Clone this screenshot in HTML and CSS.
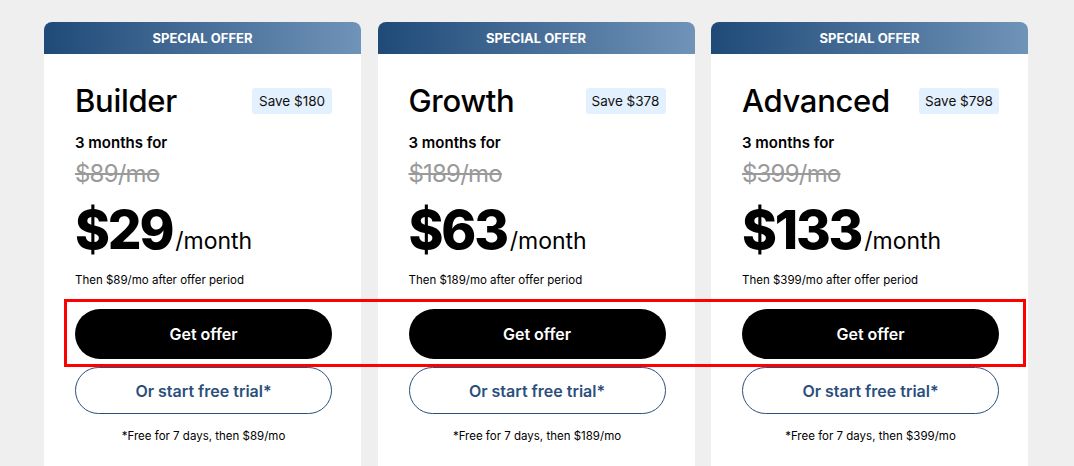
FILE: index.html
```html
<!DOCTYPE html>
<html lang="en">
<head>
<meta charset="utf-8">
<title>Pricing</title>
<link rel="stylesheet" href="styles.css">
</head>
<body>
<div class="plans">
  <div class="card">
    <div class="banner">SPECIAL OFFER</div>
    <div class="body">
      <div class="title-row">
        <h2 class="name">Builder</h2>
        <span class="save">Save $180</span>
      </div>
      <div class="term">3 months for</div>
      <div class="old">$89/mo</div>
      <div class="price"><span class="amount">$29</span><span class="per">/month</span></div>
      <div class="then">Then $89/mo after offer period</div>
      <button class="btn primary">Get offer</button>
      <button class="btn outline">Or start free trial*</button>
      <div class="note">*Free for 7 days, then $89/mo</div>
    </div>
  </div>
  <div class="card">
    <div class="banner">SPECIAL OFFER</div>
    <div class="body">
      <div class="title-row">
        <h2 class="name">Growth</h2>
        <span class="save">Save $378</span>
      </div>
      <div class="term">3 months for</div>
      <div class="old">$189/mo</div>
      <div class="price"><span class="amount">$63</span><span class="per">/month</span></div>
      <div class="then">Then $189/mo after offer period</div>
      <button class="btn primary">Get offer</button>
      <button class="btn outline">Or start free trial*</button>
      <div class="note">*Free for 7 days, then $189/mo</div>
    </div>
  </div>
  <div class="card">
    <div class="banner">SPECIAL OFFER</div>
    <div class="body">
      <div class="title-row">
        <h2 class="name">Advanced</h2>
        <span class="save">Save $798</span>
      </div>
      <div class="term">3 months for</div>
      <div class="old">$399/mo</div>
      <div class="price"><span class="amount">$133</span><span class="per">/month</span></div>
      <div class="then">Then $399/mo after offer period</div>
      <button class="btn primary">Get offer</button>
      <button class="btn outline">Or start free trial*</button>
      <div class="note">*Free for 7 days, then $399/mo</div>
    </div>
  </div>
  <div class="highlight"></div>
</div>
</body>
</html>
```
FILE: styles.css
```css
* { box-sizing: border-box; }
html, body { margin: 0; padding: 0; }
body {
  background: #efefef;
  font-family: Inter, "Liberation Sans", sans-serif;
  color: #000;
  height: 466px;
  overflow: hidden;
}
.plans {
  position: relative;
  width: 984px;
  margin-left: 44px;
  padding-top: 22px;
  display: grid;
  grid-template-columns: repeat(3, 1fr);
  column-gap: 16.5px;
}
.card {
  background: #fff;
  border-radius: 8px 8px 0 0;
  height: 444px;
  overflow: hidden;
}
.banner {
  height: 32px;
  background: linear-gradient(90deg, #1f4a78 0%, #7093b8 100%);
  color: #fff;
  font-size: 13px;
  font-weight: 700;
  display: flex;
  align-items: center;
  justify-content: center;
}
.body {
  padding: 34px 29px 0 31px;
  display: flex;
  flex-direction: column;
}
.title-row {
  display: flex;
  justify-content: space-between;
  align-items: center;
  height: 26px;
}
.name {
  margin: 0;
  font-size: 31px;
  font-weight: 500;
  line-height: 26px;
  letter-spacing: -0.3px;
}
.save {
  background: #e3f0fd;
  border-radius: 3px;
  height: 26px;
  width: 80px;
  display: flex;
  align-items: center;
  justify-content: center;
  font-size: 13.5px;
  color: #111;
}
.term {
  margin-top: 19px;
  font-size: 15px;
  font-weight: 600;
  line-height: 20px;
}
.old {
  margin-top: 6px;
  font-size: 24px;
  color: #9a9a9a;
  text-decoration: line-through;
  text-decoration-thickness: 2px;
  line-height: 30px;
  letter-spacing: -0.8px;
}
.price {
  margin-top: 14px;
  display: flex;
  align-items: baseline;
  line-height: 54px;
}
.amount {
  font-size: 53px;
  font-weight: 800;
  letter-spacing: -2.2px;
}
.per {
  font-size: 23px;
  font-weight: 400;
  margin-left: 3px;
}
.then {
  margin-top: 4px;
  font-size: 11.5px;
  line-height: 16px;
}
.btn {
  font-family: inherit;
  font-size: 16px;
  font-weight: 600;
  border-radius: 25px;
  width: 100%;
  cursor: pointer;
}
.primary {
  margin-top: 21px;
  height: 50px;
  background: #000;
  color: #fff;
  border: none;
}
.outline {
  margin-top: 8px;
  height: 47px;
  background: #fff;
  color: #2b4f7c;
  border: 1px solid #2b4f7c;
}
.note {
  margin-top: 14px;
  text-align: center;
  font-size: 11.5px;
  line-height: 16px;
}
.highlight {
  position: absolute;
  left: 20px;
  top: 299px;
  width: 962px;
  height: 68px;
  border: 3px solid #ff0000;
  pointer-events: none;
}
```
